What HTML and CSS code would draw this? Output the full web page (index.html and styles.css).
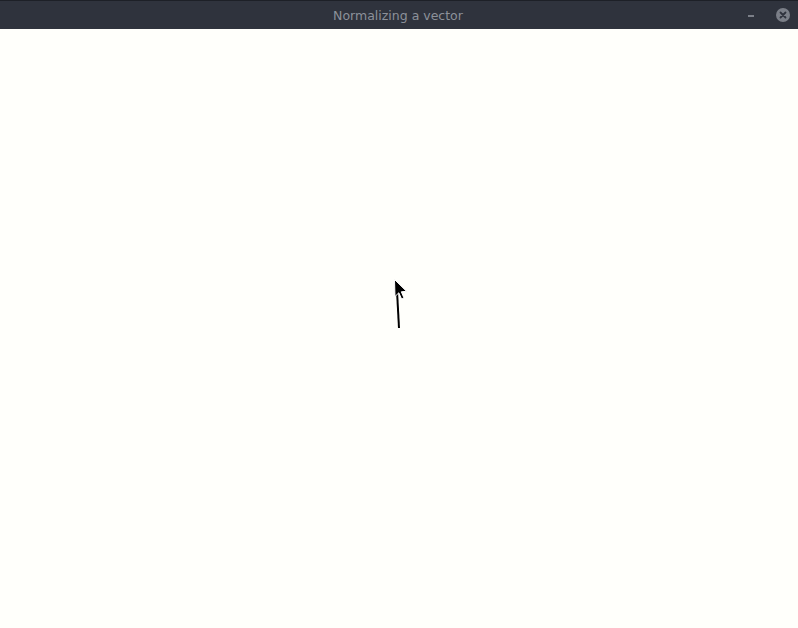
FILE: index.html
```html
<!DOCTYPE html>
<html>
<head>
<meta charset="utf-8">
<link rel="stylesheet" href="styles.css">
</head>
<body>
<div class="window">
  <div class="titlebar">
    <div class="title">Normalizing a vector</div>
    <div class="controls">
      <span class="minimize"></span>
      <span class="close">
        <svg width="14" height="14" viewBox="0 0 14 14">
          <circle cx="7" cy="7" r="7" fill="#7b7f88"/>
          <path d="M4.5 4.5 L9.5 9.5 M9.5 4.5 L4.5 9.5" stroke="#2f333d" stroke-width="1.8" stroke-linecap="round"/>
        </svg>
      </span>
    </div>
  </div>
  <div class="canvas">
    <svg class="scene" width="798" height="599" viewBox="0 0 798 599">
      <line x1="397" y1="262" x2="399" y2="299" stroke="#000" stroke-width="2"/>
      <path d="M394.5 250.5 L395 267.5 L398.8 263.8 L401.6 270 L404 269 L401.3 262.8 L406.5 262.3 Z" fill="#000" stroke="#fff" stroke-width="1"/>
    </svg>
  </div>
</div>
</body>
</html>
```
FILE: styles.css
```css
html, body {
  margin: 0;
  padding: 0;
  width: 798px;
  height: 628px;
  overflow: hidden;
  background: #fffffb;
}
.window {
  display: flex;
  flex-direction: column;
  width: 798px;
  height: 628px;
}
.titlebar {
  height: 28px;
  flex: none;
  background: #2f333d;
  border-top: 1px solid #1d2027;
  display: flex;
  align-items: center;
  justify-content: center;
  position: relative;
}
.title {
  font-family: "DejaVu Sans", sans-serif;
  font-size: 12.5px;
  color: #8c919a;
  margin-left: -2px;
}
.controls {
  position: absolute;
  right: 8px;
  top: 7px;
  display: flex;
  align-items: center;
  gap: 22px;
}
.minimize {
  display: block;
  width: 6px;
  height: 2px;
  background: #7b7f88;
  margin-top: 1px;
}
.close {
  display: block;
  width: 14px;
  height: 14px;
}
.close svg {
  display: block;
}
.canvas {
  flex: 1;
  background: #fffffb;
}
.scene {
  display: block;
}
```
